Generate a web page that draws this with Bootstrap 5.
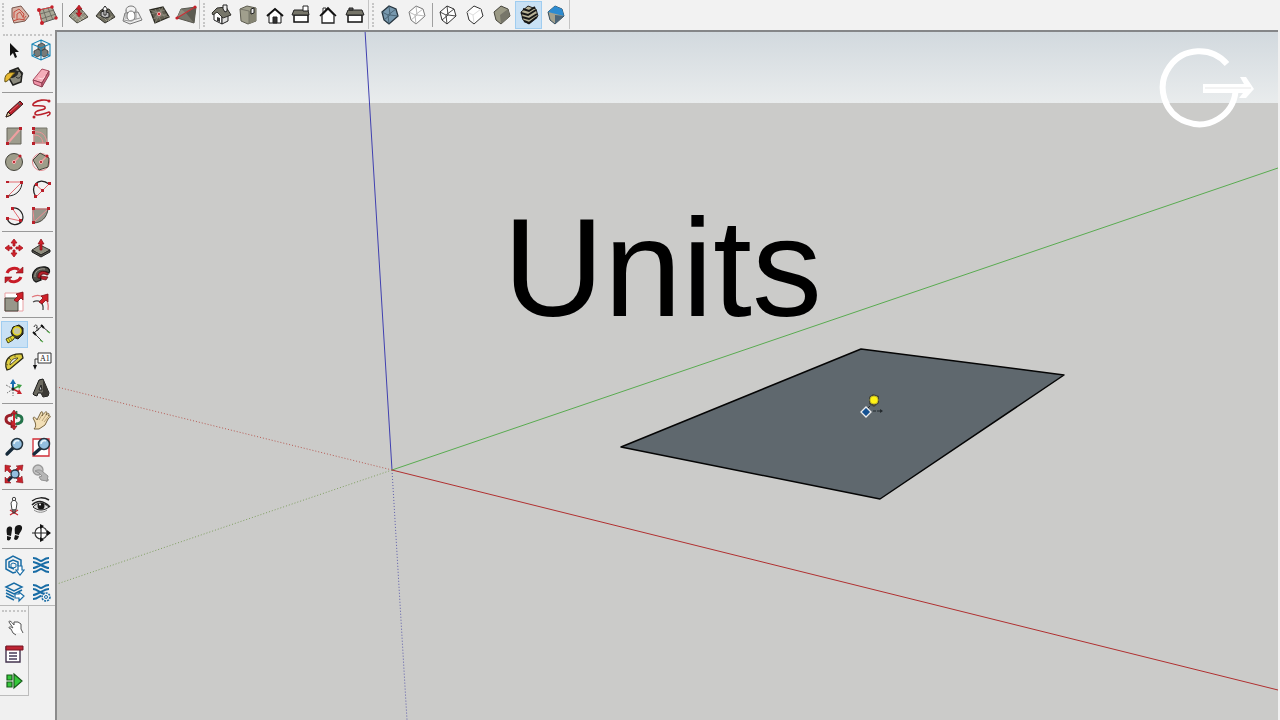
<!DOCTYPE html>
<html lang="en">
<head>
<meta charset="utf-8">
<meta name="viewport" content="width=device-width, initial-scale=1">
<title>Units</title>
<link href="https://cdn.jsdelivr.net/npm/bootstrap@5.3.0/dist/css/bootstrap.min.css" rel="stylesheet">
<style>
  body { background: #f0f0f0; font-family: "Liberation Sans", Arial, sans-serif; }
  .topbar { height: 30px; background: #f2f2f2; padding-left: 1px; }
  .toolset { height: 29px; border-right: 1px solid #c4c4c4; }
  .toolset + .toolset { padding-left: 2px; }
  .grip-v { width: 0; height: 24px; border-left: 2px dotted #c6c6c6; margin: 0 3px 0 1px; }
  .grip-h { height: 0; border-top: 2px dotted #c6c6c6; margin: 3px 2px 1px; }
  .rule-v { width: 1px; height: 24px; background: #a0a0a0; margin: 0 2px; }
  .rule-h { height: 6px; padding: 2px 1px; }
  .rule-h::before { content: ""; display: block; height: 1px; background: #999; }
  .tool { min-width: 0; border: 1px solid transparent; border-radius: 0; line-height: 1; display: flex; align-items: center; justify-content: center; }
  .tool svg { width: 22px; height: 22px; flex: none; fill: none; stroke: #222; stroke-width: 1; }
  .tool.active { background: #c9e1f5 !important; border-color: #a0cdf0 !important; }
  .run { display: grid; grid-auto-flow: column; grid-auto-columns: 1fr; height: 28px; }
  .run2 { width: 53px; } .run5 { width: 134px; } .run6 { width: 160px; }
  .rail { width: 55px; }
  .palette { background: #f2f2f2; border-bottom: 1px solid #b8b8b8; padding: 1px 1px 0; }
  .pair { display: grid; grid-template-columns: 1fr 1fr; grid-auto-rows: 1fr; }
  .rows2 { height: 53px; } .rows3 { height: 80px; } .rows5 { height: 133px; }
  .small-palette { width: 29px; background: #f2f2f2; border: solid #bcbcbc; border-width: 0 1px 1px 0; padding: 1px 0; }
  .small-palette .tool { width: 27px; height: 27px; }
  .stage { border-left: 2px solid #8b8b8b; border-top: 2px solid #858688; margin-right: 2px; background: #cbcbc9; min-width: 0; }
  .caption { top: 166px; left: 446px; font-size: 140px; line-height: 140px; font-weight: 400; color: #000; }
  .brandmark { top: 16px; right: 22px; width: 98px; height: 84px; }
</style>
</head>
<body>
<div class="d-flex flex-column vh-100 overflow-hidden">
  <header class="topbar d-flex flex-shrink-0" role="toolbar" aria-label="Drawing toolbars">
    <div class="toolset d-flex align-items-center">
      <span class="grip-v"></span>
      <div class="run run2">
        <button class="btn p-0 tool" aria-label="From contours"><svg viewBox="0 0 22 22"><path d="M3 4l9-2 8 10-4 5-11 2-2-6z" fill="#d9b4a7" stroke="#76564d"/><path d="M5 14V8l5-3 5 5-1 4M8 16v-6l3-2 3 5M4 17l6-2 6 1M14 16l3-4" stroke="#c84e40"/></svg></button>
        <button class="btn p-0 tool" aria-label="From scratch"><svg viewBox="0 0 22 22"><path d="M3 6l13-3 5 11L6 19z" fill="#aaa998" stroke="#555"/><path d="M7 5l4 12M12 4l5 12M4 10l14-4M5 15l15-5" stroke="#65655b" stroke-width=".8"/><path d="M6 19L3 6l13-3" stroke="#d44"/><g fill="#c8202a" stroke="none"><circle cx="3" cy="6" r="2"/><circle cx="16" cy="3" r="1.7"/><circle cx="20" cy="14" r="1.7"/><circle cx="6" cy="19" r="2"/></g></svg></button>
      </div>
      <span class="rule-v"></span>
      <div class="run run5">
        <button class="btn p-0 tool" aria-label="Smoove"><svg viewBox="0 0 22 22"><path d="M2 12l7-7 5 0 7 8-11 6z" fill="#918f7e" stroke="#4a493f"/><path d="M5 14l9-8M8 16l9-8M11 18l8-7M5 9l9 8M8 6l9 9" stroke="#c0beac" stroke-width=".7"/><path d="M12 1l3 4h-2v4h2l-3 4-3-4h2V5H9z" fill="#c9202a" stroke="#961018" stroke-width=".6"/></svg></button>
        <button class="btn p-0 tool" aria-label="Stamp"><svg viewBox="0 0 22 22"><path d="M2 12l5-6 8-1 6 8-10 6z" fill="#6f6d5f" stroke="#35342e"/><path d="M4 12l5 1 4 4M6 10l11 5M14 17l4-5" stroke="#aaa895" stroke-width=".8"/><path d="M7 12V8l3-1 5 2v4l-4 1z" fill="#bbb" stroke="#222"/><path d="M10 11V6H8l3-4 3 4h-2v5z" fill="#fff"/></svg></button>
        <button class="btn p-0 tool" aria-label="Drape"><svg viewBox="0 0 22 22"><path d="M4 9l13-1 4 8-12 4-7-3z" fill="#ededed" stroke="#777"/><ellipse cx="10" cy="6" rx="5" ry="4" stroke="#777"/><ellipse cx="10" cy="12" rx="4" ry="5" fill="#fff" stroke="#777"/><path d="M5 6v9M15 6v9M3 16l5 1 11-3" stroke="#999"/></svg></button>
        <button class="btn p-0 tool" aria-label="Add detail"><svg viewBox="0 0 22 22"><path d="M2 6l13-3 6 10L7 19z" fill="#625f51" stroke="#292820" stroke-width="1.3"/><path d="M3 10l14-4M5 15l14-5M7 5l6 12M11 4l6 10M2 6l19 7M7 19l8-16" stroke="#99978a" stroke-width=".6"/><path d="M6 14l5-7 5 4z" fill="#817f70" stroke="none"/><circle cx="11" cy="10" r="1.7" fill="#d52831" stroke="#eaa"/></svg></button>
        <button class="btn p-0 tool" aria-label="Flip edge"><svg viewBox="0 0 22 22"><path d="M6 5l15-2-2 16-17-5z" fill="#77766b" stroke="#595850"/><path d="M11 9l8 10 2-16z" fill="#5c5b52" stroke="none"/><path d="M11 9L6 5l-4 9z" fill="#8f8e80" stroke="none"/><path d="M2 14l18-11" stroke="#c82f35" stroke-width="1.2"/><circle cx="2" cy="14" r="1.6" fill="#c8202a" stroke="none"/><circle cx="20" cy="3" r="1.6" fill="#c8202a" stroke="none"/></svg></button>
      </div>
    </div>
    <div class="toolset d-flex align-items-center">
      <span class="grip-v"></span>
      <div class="run run6">
        <button class="btn p-0 tool" aria-label="Iso view"><svg viewBox="0 0 22 22"><path d="M4 10l3-3 5 6v7l-8-4z" fill="#fff"/><path d="M12 13l6-2v6l-6 3z" fill="#ddd"/><path d="M2 9l5-5 9-1 5 8-8 3-6-6-4 3z" fill="#77766a" stroke="#302f2b"/><path d="M13 5V1h4v6l-2 1z" fill="#eee"/><path d="M7 13l3 1v4l-3-1z" fill="#333" stroke="none"/></svg></button>
        <button class="btn p-0 tool" aria-label="Top view"><svg viewBox="0 0 22 22"><path d="M3 5l7-3 9 2v13l-8 3-7-3z" fill="#a09f8d" stroke="#5d5c50"/><path d="M12 7l7-3v13l-7 3z" fill="#858473" stroke="none"/><path d="M3 5l9 2v13" stroke="#77766a"/><path d="M14 5l3-1v5l-3 1z" fill="#eee"/></svg></button>
        <button class="btn p-0 tool" aria-label="Front view"><svg viewBox="0 0 22 22"><path d="M5 10v9h12v-9l-6-5z" fill="#fff" stroke="#111"/><path d="M3 12l8-7 8 7" stroke="#111" stroke-width="2"/><path d="M9 13h4v6H9z" fill="#333"/></svg></button>
        <button class="btn p-0 tool" aria-label="Right view"><svg viewBox="0 0 22 22"><path d="M4 11h14v7H4z" fill="#fff" stroke="#111" stroke-width="1.5"/><path d="M4 6h14l1 5H2z" fill="#77766a"/><path d="M13 2h5v5h-5z" fill="#fff"/></svg></button>
        <button class="btn p-0 tool" aria-label="Back view"><svg viewBox="0 0 22 22"><path d="M6 9V4h3v3" fill="#fff" stroke="#333"/><path d="M5 11v8h12v-8l-6-6z" fill="#fff" stroke="#222" stroke-width="1.3"/><path d="M3 12l8-8 8 8" stroke="#111" stroke-width="1.6"/></svg></button>
        <button class="btn p-0 tool" aria-label="Left view"><svg viewBox="0 0 22 22"><path d="M4 11h14v7H4z" fill="#fff" stroke="#111" stroke-width="1.5"/><path d="M4 6h14l2 5H2z" fill="#77766a"/><path d="M5 4h4v2H5z" fill="#666"/></svg></button>
      </div>
    </div>
    <div class="toolset d-flex align-items-center">
      <span class="grip-v"></span>
      <div class="run run2">
        <button class="btn p-0 tool" aria-label="X-ray"><svg viewBox="0 0 22 22"><path d="M3 8l7-6 7 3 2 7-9 8-5-4z" fill="#7798ae" stroke="#26343e" stroke-width="1.3"/><path d="M3 8l6 3 8-6M9 11l1 9M10 2l1 9-6 5M11 11l8 1" stroke="#3f5868" stroke-width=".8"/></svg></button>
        <button class="btn p-0 tool" aria-label="Back edges"><svg viewBox="0 0 22 22"><path d="M3 8l7-6 7 3 2 7-9 8-5-4z" fill="#fff" stroke="#777"/><path d="M3 8l6 3 8-6M9 11l1 9M10 2l1 9-6 5M11 11l8 1" stroke="#aaa" stroke-width=".8"/></svg></button>
      </div>
      <span class="rule-v"></span>
      <div class="run run5">
        <button class="btn p-0 tool" aria-label="Wireframe"><svg viewBox="0 0 22 22"><path d="M3 8l7-6 7 3 2 7-9 8-5-4z" fill="#fff" stroke="#333"/><path d="M3 8l6 3 8-6M9 11l1 9M10 2l1 9-6 5M11 11l8 1" stroke="#333" stroke-width=".9"/></svg></button>
        <button class="btn p-0 tool" aria-label="Hidden line"><svg viewBox="0 0 22 22"><path d="M3 8l7-6 7 3 2 7-9 8-5-4z" fill="#fff" stroke="#333"/><path d="M3 8l6 3 8-6M9 11l1 8" stroke="#ddd"/></svg></button>
        <button class="btn p-0 tool" aria-label="Shaded"><svg viewBox="0 0 22 22"><path d="M3 8l7-6 7 3 2 7-9 8-5-4z" fill="#9a9985" stroke="#45443b"/><path d="M9 11l8-6 2 7-9 8z" fill="#77766a" stroke="none"/></svg></button>
        <button class="btn p-0 tool active" aria-label="Shaded with textures" aria-pressed="true"><svg viewBox="0 0 22 22"><path d="M3 8l7-6 8 3 2 7-9 8-6-4z" fill="#b7b297" stroke="#222"/><path d="M5 5l6 2 6-4M3 9l7 2 8-5M4 13l7 2 8-5M6 17l5 2 8-6" stroke="#171717" stroke-width="2"/></svg></button>
        <button class="btn p-0 tool" aria-label="Monochrome"><svg viewBox="0 0 22 22"><path d="M3 8l7-6 7 3 2 7-9 8-5-4z" fill="#a4a18d" stroke="#344c5c"/><path d="M3 8l7-6 7 3 2 7z" fill="#2d8bd0" stroke="none"/><path d="M10 11l9 1-9 8z" fill="#4c6679" stroke="none"/></svg></button>
      </div>
    </div>
  </header>

  <div class="d-flex flex-grow-1 overflow-hidden">
    <aside class="rail flex-shrink-0" role="toolbar" aria-label="Large tool set">
      <div class="palette">
        <div class="grip-h"></div>
        <div class="pair rows2">
          <button class="btn p-0 tool" aria-label="Select"><svg viewBox="0 0 22 22"><path d="M7 4v13l3-3 2 5 2-1-2-5h4z" fill="#111" stroke="none"/></svg></button>
          <button class="btn p-0 tool" aria-label="Make component"><svg viewBox="0 0 22 22"><g stroke="#333" stroke-width=".8" fill="#777b78"><path d="M8 6l4-2 3 2v4l-4 2-3-2z"/><path d="M4 12l4-2 3 2v4l-4 2-3-2z"/><path d="M11 12l4-2 3 2v4l-4 2-3-2z"/></g><path d="M11 1l9 4v12l-9 4-9-4V5zM2 5l9 4 9-4M11 9v12M11 1v3M2 17l3-2M20 17l-3-2" stroke="#1784b5" stroke-width="1.1"/></svg></button>
          <button class="btn p-0 tool" aria-label="Paint bucket"><svg viewBox="0 0 22 22"><path d="M7 5l8-3 4 6-1 8-8 3-4-7z" fill="#8b8a7d" stroke="#1f1f1c" stroke-width="1.5"/><ellipse cx="10" cy="8" rx="5" ry="3" fill="#2d2c29" transform="rotate(-24 10 8)"/><path d="M2 16c-1-6 2-11 10-9-4 2-4 7-10 9z" fill="#e8ba32" stroke="#655317"/><path d="M14 6c6-2 7 2 4 4M13 11c2 2 4 1 5-1" stroke="#222"/></svg></button>
          <button class="btn p-0 tool" aria-label="Eraser"><svg viewBox="0 0 22 22"><path d="M3 14L12 3l7 2-7 12z" fill="#f4adb9" stroke="#a94c60"/><path d="M3 14l9 3v4l-8-3z" fill="#f093a8" stroke="#8f4052"/><path d="M12 17l7-12v4l-7 12z" fill="#c96379" stroke="#8f4052"/><path d="M8 12l5 1 2-3" stroke="#ffdce1"/></svg></button>
        </div>
        <div class="rule-h"></div>
        <div class="pair rows5">
          <button class="btn p-0 tool" aria-label="Line"><svg viewBox="0 0 22 22"><path d="M3 19l2-5L17 3l3 3L8 17z" fill="#b9202a" stroke="#48161a"/><path d="M7 14L17 5" stroke="#e3636a"/><path d="M3 19l2-5 3 3z" fill="#e2c99b" stroke="#2c2018"/><path d="M15 5l3 3" stroke="#555" stroke-width="1.5"/></svg></button>
          <button class="btn p-0 tool" aria-label="Freehand"><svg viewBox="0 0 22 22"><path d="M19 3C15 1 8 2 4 5c-5 5 8 1 11 4 2 4-11 2-10 7 2 3 10-1 14-2 2 1 1 3-2 4" stroke="#b9202a" stroke-width="1.6"/><circle cx="19" cy="3" r="1.5" fill="#b9202a" stroke="none"/><circle cx="4" cy="19" r="1.5" fill="#b9202a" stroke="none"/></svg></button>
          <button class="btn p-0 tool" aria-label="Rectangle"><svg viewBox="0 0 22 22"><path d="M4 3h14v16H4z" fill="#9e9d8e" stroke="#66655b"/><path d="M4 19L18 3" stroke="#ef9fa0" stroke-width="2"/><path d="M3 17h3v3H3zM16 2h3v3h-3z" fill="#b9202a" stroke="none"/></svg></button>
          <button class="btn p-0 tool" aria-label="Rotated rectangle"><svg viewBox="0 0 22 22"><path d="M4 3h13v15H4z" fill="#9e9d8e" stroke="#77766b"/><path d="M17 18H4V3M4 7c8-1 12 3 13 11M4 10c6 0 8 3 9 8" stroke="#ef9296"/><path d="M2 2h3v3H2zM2 6h3v3H2zM2 17h3v3H2zM16 17h3v3h-3z" fill="#b9202a" stroke="none"/></svg></button>
          <button class="btn p-0 tool" aria-label="Circle"><svg viewBox="0 0 22 22"><circle cx="11" cy="11" r="8.5" fill="#9e9d8a" stroke="#45443b"/><path d="M11 11l6-6" stroke="#ef9fa0" stroke-width="1.5"/><circle cx="11" cy="11" r="1.6" fill="#b9202a" stroke="#f5b4b4"/><circle cx="17" cy="5" r="1.6" fill="#b9202a" stroke="none"/></svg></button>
          <button class="btn p-0 tool" aria-label="Polygon"><svg viewBox="0 0 22 22"><circle cx="11" cy="11" r="8.500" stroke="#e28a8e"/><path d="M3 9l7-7 9 5-1 9-9 3z" fill="#9e9d8a" stroke="#45443b"/><path d="M11 11l6-6" stroke="#ef9fa0" stroke-width="1.5"/><circle cx="11" cy="11" r="1.6" fill="#b9202a" stroke="#f5b4b4"/><circle cx="17" cy="5" r="1.6" fill="#b9202a" stroke="none"/></svg></button>
          <button class="btn p-0 tool" aria-label="Arc"><svg viewBox="0 0 22 22"><path d="M4 4h15L5 18" stroke="#e26a71"/><path d="M19 4c0 8-6 14-14 14" stroke="#222"/><path d="M3 3h3v2H3zM17 3h3v3h-3zM3 17h3v3H3z" fill="#b9202a" stroke="none"/></svg></button>
          <button class="btn p-0 tool" aria-label="2 point arc"><svg viewBox="0 0 22 22"><path d="M6 19C-1 9 8-2 19 6" stroke="#222" stroke-width="1.3"/><path d="M6 19L19 6M6 7l7 6" stroke="#e26a71"/><path d="M4 17h3v3H4zM18 4h3v3h-3zM5 5h3v3H5zM11 11h3v3h-3z" fill="#b9202a" stroke="none"/></svg></button>
          <button class="btn p-0 tool" aria-label="3 point arc"><svg viewBox="0 0 22 22"><path d="M9 3c8-1 13 7 10 13-5 6-13 4-15-3" stroke="#222" stroke-width="1.2"/><path d="M9 3l9 13-14-3" stroke="#e26a71"/><path d="M8 2h3v3H8zM16 14h3v3h-3zM3 12h3v3H3z" fill="#b9202a" stroke="none"/></svg></button>
          <button class="btn p-0 tool" aria-label="Pie"><svg viewBox="0 0 22 22"><path d="M3 4h15c-1 8-6 14-15 14z" fill="#96958a" stroke="#45443b"/><path d="M3 4h15L4 17z" stroke="#ef8f93"/><path d="M2 2h3v3H2zM17 2h3v3h-3zM2 16h3v3H2z" fill="#b9202a" stroke="none"/></svg></button>
        </div>
        <div class="rule-h"></div>
        <div class="pair rows3">
          <button class="btn p-0 tool" aria-label="Move"><svg viewBox="0 0 22 22"><path d="M11 2l3 4h-2v3h-2V6H8zM11 20l-3-4h2v-3h2v3h2zM2 11l4-3v2h3v2H6v2zM20 11l-4 3v-2h-3v-2h3V8z" fill="#d02029" stroke="#a81822" stroke-width=".8"/></svg></button>
          <button class="btn p-0 tool" aria-label="Push/Pull"><svg viewBox="0 0 22 22"><path d="M2 13l8-5 10 5-9 5z" fill="#8f8e7f" stroke="#35342e"/><path d="M2 13v2l9 5 9-5v-2l-9 5z" fill="#58574e" stroke="#222"/><path d="M10 13V7H8l3-5 3 5h-2v6z" fill="#d02029" stroke="#811018" stroke-width=".7"/></svg></button>
          <button class="btn p-0 tool" aria-label="Rotate"><svg viewBox="0 0 22 22"><path d="M4 9c2-5 9-6 12-3M18 13c-2 5-9 6-12 3" stroke="#c81c27" stroke-width="3"/><path d="M13 9h7V3zM9 13H2v6z" fill="#c81c27" stroke="#811018" stroke-width=".6"/></svg></button>
          <button class="btn p-0 tool" aria-label="Follow me"><svg viewBox="0 0 22 22"><path d="M6 18C-1 14 3 2 15 3c5 1 5 4 4 6-6-3-11 2-8 7z" fill="#514f48" stroke="#151515" stroke-width="1.3"/><path d="M5 13C4 8 9 4 15 5" stroke="#a5a398"/><path d="M8 14c-1-5 3-8 8-6 3 1 3 3 1 3-4-2-6-1-7 3z" fill="#b9202a" stroke="#5c1115"/><path d="M11 12l7 1-2 3-5-1z" fill="#b9202a" stroke="#5c1115" stroke-width=".7"/></svg></button>
          <button class="btn p-0 tool" aria-label="Scale"><svg viewBox="0 0 22 22"><path d="M2 2h18v18H2z" fill="#fff" stroke="#e9a0a3"/><path d="M2 7h13v13H2z" fill="#98978a" stroke="#45443b"/><path d="M11 9l4-4-2-2 7-2v8l-2-2-4 4z" fill="#d02029" stroke="#811018" stroke-width=".8"/></svg></button>
          <button class="btn p-0 tool" aria-label="Offset"><svg viewBox="0 0 22 22"><path d="M2 6c9-5 18 3 16 13" stroke="#e0767b" stroke-width="1.3"/><path d="M3 11c6-3 11 1 10 8" stroke="#444" stroke-width="1.3"/><path d="M9 11l4-4-2-2 7-2v8l-2-2-4 4z" fill="#d02029" stroke="#811018" stroke-width=".8"/></svg></button>
        </div>
        <div class="rule-h"></div>
        <div class="pair rows3">
          <button class="btn p-0 tool active" aria-label="Tape measure" aria-pressed="true"><svg viewBox="0 0 22 22"><path d="M10 4l6-2 4 3v6l-5 5-5-2-2-5z" fill="#3c3b25" stroke="#171712"/><circle cx="14" cy="8" r="4" fill="#c7c6a0" stroke="#e7d821" stroke-width="1.5"/><path d="M9 13l-6 3 2 4 5-3 2-3" fill="#e7db28" stroke="#444215"/><path d="M5 15l2 3M7 14l2 3" stroke="#333" stroke-width=".6"/></svg></button>
          <button class="btn p-0 tool" aria-label="Dimensions"><svg viewBox="0 0 22 22"><path d="M4 10l9-8" stroke="#222"/><path d="M3 9l3 3M11 2l3 3" stroke="#111" stroke-width="1.8"/><path d="M6 12l6 6M14 5l5 4" stroke="#222" stroke-width=".9"/><path d="M10 17l3 2M17 8l3 2" stroke="#5caa51" stroke-width="1.3"/><path d="M4 4c1-4 5-1 2 1 4-1 3 4 0 2" stroke="#333"/></svg></button>
          <button class="btn p-0 tool" aria-label="Protractor"><svg viewBox="0 0 22 22"><path d="M4 20C0 11 6 3 19 4l1 4L7 19z" fill="#dccb40" stroke="#2d2b15" stroke-width="1.3"/><path d="M7 15c0-4 3-7 8-7z" fill="#f2f2f2" stroke="#2d2b15" stroke-width=".8"/><path d="M3 14l2 1M6 8l2 2M12 4v3" stroke="#433d15" stroke-width=".7"/></svg></button>
          <button class="btn p-0 tool" aria-label="Text"><svg viewBox="0 0 22 22"><path d="M8 3h13v10H8z" fill="#fff" stroke="#333"/><path d="M8 9H5v7" stroke="#333"/><path d="M3 15h4l-2 5z" fill="#111" stroke="none"/><text x="10" y="11" font-family="Liberation Serif, serif" font-size="8" fill="#111" stroke="none">A1</text></svg></button>
          <button class="btn p-0 tool" aria-label="Axes"><svg viewBox="0 0 22 22"><path d="M10 12V5" stroke="#176cae" stroke-width="2"/><path d="M7 7l3-5 3 5z" fill="#176cae" stroke="none"/><path d="M10 12l6 3" stroke="#c8242d" stroke-width="1.500"/><path d="M14 17l5 0-3-5z" fill="#c8242d" stroke="none"/><path d="M10 12l6-3" stroke="#3d9f43" stroke-width="1.500"/><path d="M14 7l5 1-3 4z" fill="#3d9f43" stroke="none"/><path d="M10 12v7M10 12l-7-4M10 12l-6 4" stroke="#777" stroke-dasharray="2 1"/><circle cx="10" cy="12" r="1.500" fill="#222" stroke="none"/></svg></button>
          <button class="btn p-0 tool" aria-label="3D text"><svg viewBox="0 0 22 22"><path d="M3 17L9 3l4-1 6 14-1 3-5 1-2-4H8l-1 3-3-1z" fill="#6b695f" stroke="#191918"/><path d="M13 2l6 14-1 3-5 1-2-4 2-1z" fill="#3c3a35" stroke="none"/><path d="M9 13h3l-1-5z" fill="#ddd" stroke="#222"/></svg></button>
        </div>
        <div class="rule-h"></div>
        <div class="pair rows3">
          <button class="btn p-0 tool" aria-label="Orbit"><svg viewBox="0 0 22 22"><path d="M9 6C1 6 1 14 9 15" stroke="#9b1f28" stroke-width="3"/><path d="M13 15c8-1 8-9 0-9" stroke="#24734a" stroke-width="3"/><path d="M14 2L9 6l5 4z" fill="#49a56c" stroke="#154b2d" stroke-width=".6"/><path d="M8 11l5 4-5 4z" fill="#c8242d" stroke="#6a1219" stroke-width=".6"/><path d="M11 4v14" stroke="#c8242d" stroke-width="2"/><path d="M8 5l3-4 3 4zM8 17l3 4 3-4z" fill="#c8242d" stroke="#6a1219" stroke-width=".6"/></svg></button>
          <button class="btn p-0 tool" aria-label="Pan"><svg viewBox="0 0 22 22"><path d="M4 20c2-2 2-4 1-7L3 9c1-2 3 0 4 2l4-8c2-1 2 1 1 4 4-6 6-5 4-1 3-3 4-1 2 1 3-1 3 1 0 3l-3 6-6 4z" fill="#f2dfb6" stroke="#77643f"/><path d="M9 11l3-5M12 12l4-6M14 13l4-5" stroke="#a58b60" stroke-width=".7"/></svg></button>
          <button class="btn p-0 tool" aria-label="Zoom"><svg viewBox="0 0 22 22"><path d="M4 18l7-7" stroke="#172b3b" stroke-width="3.3" stroke-linecap="round"/><circle cx="14" cy="8" r="5.5" fill="#94bfdf" stroke="#26343e" stroke-width="1.5"/><path d="M11 8c0-3 3-4 5-3" stroke="#e9f4fa" stroke-width="1.5"/></svg></button>
          <button class="btn p-0 tool" aria-label="Zoom window"><svg viewBox="0 0 22 22"><path d="M3 3h16v17H3z" fill="#fff" stroke="#d12d36" stroke-width="1.3"/><path d="M4 18l8-7" stroke="#172b3b" stroke-width="3.3" stroke-linecap="round"/><circle cx="14" cy="8" r="5.5" fill="#94bfdf" stroke="#26343e" stroke-width="1.5"/><path d="M11 8c0-3 3-4 5-3" stroke="#e9f4fa" stroke-width="1.5"/></svg></button>
          <button class="btn p-0 tool" aria-label="Zoom extents"><svg viewBox="0 0 22 22"><path d="M2 2l6 1-2 2 3 3-2 2-3-3-2 2zM20 2l-1 6-2-2-3 3-2-2 3-3-2-1zM20 20l-7-1 2-2-3-3 2-2 3 3 2-2zM2 20v-6l2 2 3-3 2 2-3 3 2 2z" fill="#c8242d" stroke="#7c1118" stroke-width=".5"/><path d="M5 18l5-5" stroke="#172b3b" stroke-width="2.5"/><circle cx="12" cy="11" r="4" fill="#94bfdf" stroke="#26343e" stroke-width="1.3"/></svg></button>
          <button class="btn p-0 tool" aria-label="Previous view"><svg viewBox="0 0 22 22"><path d="M11 10l7 8" stroke="#999" stroke-width="3"/><circle cx="8" cy="7" r="5" fill="#c7c7c7" stroke="#999" stroke-width="1.3"/><path d="M5 8c4-2 6-1 8 1l5 4-1 5-6-1-2-3 3-1-3-3z" fill="#b5b5b5" stroke="#929292"/></svg></button>
        </div>
        <div class="rule-h"></div>
        <div class="pair rows2">
          <button class="btn p-0 tool" aria-label="Position camera"><svg viewBox="0 0 22 22"><path d="M10 5h2l2 3-1 7H9L8 8z" fill="#fff" stroke="#444"/><circle cx="11" cy="4" r="1.700" fill="#eee" stroke="#444"/><path d="M7 20l8-5M7 15l8 5" stroke="#c8242d" stroke-width="1.3"/><path d="M10 14v4h2v-4" stroke="#333"/></svg></button>
          <button class="btn p-0 tool" aria-label="Look around"><svg viewBox="0 0 22 22"><path d="M2 6c5-4 12-4 17-1M2 10c5-5 11-5 18 2" stroke="#222" stroke-width="1.5"/><path d="M3 12c4-5 10-5 16 0-5 4-11 4-16 0z" fill="#ddd"/><circle cx="11" cy="11" r="3.500" fill="#171717" stroke="none"/><circle cx="10" cy="9.500" r="1" fill="#fff" stroke="none"/><path d="M4 15c4 3 9 3 13 0" stroke="#888"/></svg></button>
          <button class="btn p-0 tool" aria-label="Walk"><svg viewBox="0 0 22 22"><path d="M4 6c3-3 6-1 5 2l-1 6-4-1c0-2-1-4 0-7zM4 14l4 1c0 3-2 4-4 3zM13 4c3-2 7-1 6 3-1 3-3 4-3 6l-4-1c0-3-1-6 1-8zM12 13l4 1c-1 4-3 5-5 3z" fill="#171717" stroke="none"/></svg></button>
          <button class="btn p-0 tool" aria-label="Section plane"><svg viewBox="0 0 22 22"><circle cx="11" cy="11" r="6" fill="#fff" stroke="#333" stroke-width="1.2"/><path d="M2 11h18M11 3v16" stroke="#222" stroke-width="1.2"/><path d="M11 3l8 8-8 8" stroke="#555"/><path d="M17 8l4 3-4 3zM10 2l4 2-4 3zM10 20l4-2-4-3z" fill="#111" stroke="none"/></svg></button>
        </div>
        <div class="rule-h"></div>
        <div class="pair rows2">
          <button class="btn p-0 tool" aria-label="3D Warehouse"><svg viewBox="0 0 22 22"><g stroke="#186ca5" stroke-width="1.5"><path d="M13 18l-3 1-7-4V6l7-4 8 4v6"/><path d="M11 15l-5-2V8l4-2 5 2v4"/><path d="M8 10l2-1 3 1v3l-3 1-2-1z" stroke-width="1"/><path d="M15 12v4h-2l4 5 4-5h-2v-4z" fill="#fff" stroke-width="1.2"/></g></svg></button>
          <button class="btn p-0 tool" aria-label="Extension Warehouse"><svg viewBox="0 0 22 22"><g stroke="#186ca5" stroke-width="2"><path d="M3 4c5 0 6 3 8 3s3-3 8-3M3 18c5 0 6-3 8-3s3 3 8 3M3 8c4 0 11 6 16 6M3 14c4 0 11-6 16-6"/></g></svg></button>
          <button class="btn p-0 tool" aria-label="Send to LayOut"><svg viewBox="0 0 22 22"><g stroke="#186ca5" stroke-width="1.5"><path d="M3 6l8-4 8 4-8 4zM3 9l8 4 8-4M3 12l8 4M3 15l8 4"/><path d="M12 13h4v-2l5 4-5 5v-3h-4z" fill="#fff" stroke-width="1.2"/></g></svg></button>
          <button class="btn p-0 tool" aria-label="Extension manager"><svg viewBox="0 0 22 22"><g stroke="#186ca5" stroke-width="2"><path d="M3 4c5 0 6 3 8 3s3-3 8-3M3 18c5 0 6-3 8-3M3 8c4 0 7 4 12 5M3 14c4 0 11-6 16-6"/><circle cx="16" cy="16" r="4" fill="#f2f2f2" stroke-width="1.600" stroke-dasharray="2 1"/><circle cx="16" cy="16" r="1.500" stroke-width="1"/></g></svg></button>
        </div>
      </div>
      <div class="small-palette">
        <div class="grip-h"></div>
        <button class="btn p-0 tool" aria-label="Interact"><svg viewBox="0 0 22 22"><path d="M10 17l-2-4-2-1c0-2 2-1 4 0L6 6c0-2 2-1 5 3V6l4 0 3 2 0 5 2 4M10 17l3 2" fill="#fff" stroke="#555"/></svg></button>
        <button class="btn p-0 tool" aria-label="Component options"><svg viewBox="0 0 22 22"><path d="M3 4h14v15H3z" fill="#fff" stroke="#43334e" stroke-width="1.4"/><path d="M3 3h17v4H3z" fill="#be2433" stroke="#741522"/><path d="M6 10h8M6 13h8M6 16h8" stroke="#453c58" stroke-width="1.3"/></svg></button>
        <button class="btn p-0 tool" aria-label="Component attributes"><svg viewBox="0 0 22 22"><path d="M4 5h5v5H4zM4 12h5v5H4zM11 4l8 7-8 7z" fill="#35c83a" stroke="#185a1b" stroke-width="1.2"/></svg></button>
      </div>
    </aside>

    <main class="stage position-relative flex-grow-1 overflow-hidden">
      <svg class="d-block w-100 h-100" viewBox="57 32 1221 688" preserveAspectRatio="xMidYMid slice" role="img" aria-label="Model with a rectangle face on the ground plane">
        <defs>
          <linearGradient id="sky" x1="0" y1="0" x2="0" y2="1"><stop offset="0" stop-color="#d2d9de"/><stop offset="1" stop-color="#e9eced"/></linearGradient>
        </defs>
        <rect x="57" y="32" width="1221" height="71" fill="url(#sky)"/>
        <g fill="none" stroke-width="1">
          <path d="M365 30L392 470" stroke="#4040b0"/>
          <path d="M392 470L407 720" stroke="#5d5dab" stroke-dasharray="1 2"/>
          <path d="M392 470L1278 168" stroke="#59ab50"/>
          <path d="M392 470L57 584" stroke="#7f9f60" stroke-dasharray="1 2"/>
          <path d="M392 470L1278 690" stroke="#b03030"/>
          <path d="M392 470L57 387" stroke="#b75b54" stroke-dasharray="1 2"/>
        </g>
        <path d="M861 349L1064 375L880 499L621 447z" fill="#5f686e" stroke="#050505" stroke-width="1.5" stroke-linejoin="round"/>
        <path d="M869 397l4-3 6 2v7l-5 4-5-3z" fill="#45453a"/>
        <circle cx="874" cy="400" r="4" fill="#fff315" stroke="#c7bd22"/>
        <path d="M868 408l3-3M873 411h9" stroke="#242a2e" stroke-dasharray="3 1"/>
        <path d="M880 409l3 2-3 2z" fill="#242a2e"/>
        <path d="M866 407l5 5-5 5-5-5z" fill="#155292" stroke="#eee" stroke-width="1.3"/>
      </svg>
      <h1 class="caption position-absolute m-0">Units</h1>
      <svg class="brandmark position-absolute" viewBox="1158 48 98 84" role="img" aria-label="G arrow logo">
        <path d="M1227 64A36.500 36.500 0 1 0 1235.500 92" fill="none" stroke="#fff" stroke-width="6"/>
        <path d="M1203 84h41l-4-7h6l8 12-8 9h-7l4-5h-40z" fill="#fff"/>
        <path d="M1205 88h46" stroke="#ddd" stroke-width=".7"/>
      </svg>
    </main>
  </div>
</div>
<script src="https://cdn.jsdelivr.net/npm/bootstrap@5.3.0/dist/js/bootstrap.bundle.min.js"></script>
</body>
</html>
